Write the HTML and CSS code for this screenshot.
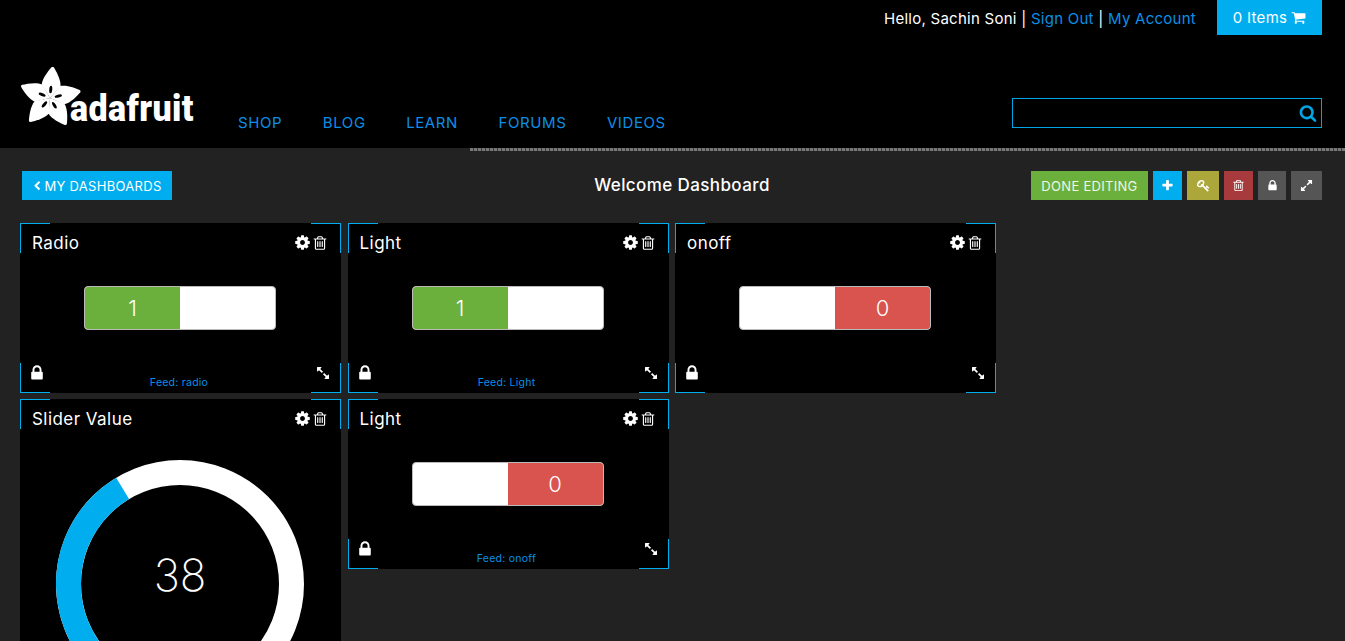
FILE: index.html
```html
<!DOCTYPE html>
<html lang="en">
<head>
<meta charset="utf-8">
<title>Welcome Dashboard</title>
<link rel="stylesheet" href="styles.css">
</head>
<body>
<svg class="sprite" width="0" height="0" aria-hidden="true">
  <symbol id="i-cog" viewBox="0 0 1792 1792"><path d="M1152 896q0-106-75-181t-181-75-181 75-75 181 75 181 181 75 181-75 75-181zm512-109v222q0 12-8 23t-20 13l-185 28q-19 54-39 91 35 50 107 138 10 12 10 25t-9 23q-27 37-99 108t-94 71q-12 0-26-9l-138-108q-44 23-91 38-16 136-29 186-7 28-36 28h-222q-14 0-24.500-8.500t-11.500-21.500l-28-184q-49-16-90-37l-141 107q-10 9-25 9-14 0-25-11-126-114-165-168-7-10-7-23 0-12 8-23 15-21 51-66.500t54-70.500q-27-50-41-99l-183-27q-13-2-21-12.500t-8-23.500v-222q0-12 8-23t19-13l186-28q14-46 39-92-40-57-107-138-10-12-10-24 0-10 9-23 26-36 98.500-107.500t94.500-71.500q13 0 26 10l138 107q44-23 91-38 16-136 29-186 7-28 36-28h222q14 0 24.500 8.500t11.500 21.500l28 184q49 16 90 37l142-107q9-9 24-9 13 0 25 10 129 119 165 170 7 8 7 22 0 12-8 23-15 21-51 66.500t-54 70.500q26 50 41 98l183 28q13 2 21 12.500t8 23.500z"/></symbol>
  <symbol id="i-trash" viewBox="0 0 1792 1792"><path d="M704 736v576q0 14-9 23t-23 9h-64q-14 0-23-9t-9-23v-576q0-14 9-23t23-9h64q14 0 23 9t9 23zm256 0v576q0 14-9 23t-23 9h-64q-14 0-23-9t-9-23v-576q0-14 9-23t23-9h64q14 0 23 9t9 23zm256 0v576q0 14-9 23t-23 9h-64q-14 0-23-9t-9-23v-576q0-14 9-23t23-9h64q14 0 23 9t9 23zm128 724v-948h-896v948q0 22 7 40.500t14.500 27 10.500 8.500h832q3 0 10.500-8.500t14.500-27 7-40.500zm-672-1076h448l-48-117q-7-9-17-11h-317q-10 2-17 11zm928 32v64q0 14-9 23t-23 9h-96v948q0 83-47 143.500t-113 60.500h-832q-66 0-113-58.500t-47-141.500v-952h-96q-14 0-23-9t-9-23v-64q0-14 9-23t23-9h309l70-167q15-37 54-63t79-26h320q40 0 79 26t54 63l70 167h309q14 0 23 9t9 23z"/></symbol>
  <symbol id="i-lock" viewBox="0 0 1792 1792"><path d="M640 768h512v-192q0-106-75-181t-181-75-181 75-75 181v192zm832 96v576q0 40-28 68t-68 28h-960q-40 0-68-28t-28-68v-576q0-40 28-68t68-28h32v-192q0-184 132-316t316-132 316 132 132 316v192h32q40 0 68 28t28 68z"/></symbol>
  <symbol id="i-expand" viewBox="0 0 1792 1792"><path d="M883 1056q0 13-10 23l-332 332 144 144q19 19 19 45t-19 45-45 19h-448q-26 0-45-19t-19-45v-448q0-26 19-45t45-19 45 19l144 144 332-332q10-10 23-10t23 10l114 114q10 10 10 23zm781-864v448q0 26-19 45t-45 19-45-19l-144-144-332 332q-10 10-23 10t-23-10l-114-114q-10-10-10-23t10-23l332-332-144-144q-19-19-19-45t19-45 45-19h448q26 0 45 19t19 45z"/></symbol>
  <symbol id="i-plus" viewBox="0 0 1792 1792"><path d="M1600 736v192q0 40-28 68t-68 28h-416v416q0 40-28 68t-68 28h-192q-40 0-68-28t-28-68v-416h-416q-40 0-68-28t-28-68v-192q0-40 28-68t68-28h416v-416q0-40 28-68t68-28h192q40 0 68 28t28 68v416h416q40 0 68 28t28 68z"/></symbol>
  <symbol id="i-key" viewBox="0 0 1792 1792"><path d="M832 512q0-80-56-136t-136-56-136 56-56 136q0 42 19 83-41-19-83-19-80 0-136 56t-56 136 56 136 136 56 136-56 56-136q0-42-19-83 41 19 83 19 80 0 136-56t56-136zm851 704q0 17-49 66t-66 49q-9 0-28.500-16t-36.500-33-38.500-40-24.500-26l-96 96 220 220q28 28 28 68 0 42-39 81t-81 39q-40 0-68-28l-671-671q-176 131-365 131-163 0-265.500-102.500t-102.500-265.500q0-160 95-313t248-248 313-95q163 0 265.500 102.500t102.500 265.500q0 189-131 365l355 355 96-96q-3-3-26-24.500t-40-38.500-33-36.500-16-28.500q0-17 49-66t66-49q13 0 23 10 6 6 46 44.500t82 79.500 86.500 86 73 78 28.500 41z"/></symbol>
  <symbol id="i-search" viewBox="0 0 1792 1792"><path d="M1216 832q0-185-131.500-316.500t-316.500-131.500-316.500 131.500-131.500 316.500 131.500 316.500 316.500 131.500 316.500-131.500 131.500-316.500zm512 832q0 52-38 90t-90 38q-54 0-90-38l-343-342q-179 124-399 124-143 0-273.500-55.500t-225-150-150-225-55.500-273.500 55.500-273.500 150-225 225-150 273.500-55.500 273.500 55.500 225 150 150 225 55.500 273.500q0 220-124 399l343 343q37 37 37 90z"/></symbol>
  <symbol id="i-cart" viewBox="0 0 1792 1792"><path d="M704 1536q0 52-38 90t-90 38-90-38-38-90 38-90 90-38 90 38 38 90zm896 0q0 52-38 90t-90 38-90-38-38-90 38-90 90-38 90 38 38 90zm128-1088v512q0 24-16.500 42.500t-40.500 21.500l-1044 122q13 60 13 70 0 16-24 64h920q26 0 45 19t19 45-19 45-45 19h-1024q-26 0-45-19t-19-45q0-11 8-31.500t16-36 21.500-40 15.500-29.500l-177-823h-204q-26 0-45-19t-19-45 19-45 45-19h256q16 0 28.500 6.500t19.500 15.500 13 24.500 8 26 5.500 29.500 4.500 26h1201q26 0 45 19t19 45z"/></symbol>
  <symbol id="i-chevron" viewBox="0 0 1792 1792"><path d="M1427 301l-531 531 531 531q19 19 19 45t-19 45l-166 166q-19 19-45 19t-45-19l-742-742q-19-19-19-45t19-45l742-742q19-19 45-19t45 19l166 166q19 19 19 45t-19 45z"/></symbol>
</svg>

<header class="site-header">
  <div class="account-bar">
    <p class="account-links">Hello, Sachin Soni | <a href="#">Sign Out</a> | <a href="#">My Account</a></p>
    <a class="cart-button" href="#">0 Items <svg class="icon icon-cart"><use href="#i-cart"/></svg></a>
  </div>
  <div class="main-bar">
    <a class="logo" href="#">
      <svg class="logo-flower" viewBox="0 0 64 64" aria-hidden="true">
        <g transform="translate(31 31) rotate(5)">
          <path id="petal" d="M0 0L-9.400 -12.500C-9.500 -19 -4 -27 -1.200 -30.800Q0 -32 1.200 -30.800C4 -27 9.500 -19 9.400 -12.500Z" fill="#fff"/>
          <use href="#petal" transform="rotate(72)"/>
          <use href="#petal" transform="rotate(144)"/>
          <use href="#petal" transform="rotate(216)"/>
          <use href="#petal" transform="rotate(288)"/>
          <g fill="#000">
            <ellipse id="seed" cx="0" cy="-8.500" rx="1.500" ry="3.700"/>
            <use href="#seed" transform="rotate(72)"/>
            <use href="#seed" transform="rotate(144)"/>
            <use href="#seed" transform="rotate(216)"/>
            <use href="#seed" transform="rotate(288)"/>
          </g>
        </g>
      </svg>
      <span class="logo-word">adafruit</span>
    </a>
    <nav class="main-nav">
      <a href="#">SHOP</a>
      <a href="#">BLOG</a>
      <a href="#">LEARN</a>
      <a href="#">FORUMS</a>
      <a href="#">VIDEOS</a>
    </nav>
    <form class="search">
      <input class="search-input" type="text" aria-label="Search">
      <svg class="icon icon-search"><use href="#i-search"/></svg>
    </form>
  </div>
</header>
<div class="header-rule"></div>

<main class="content">
  <div class="toolbar">
    <a class="btn btn-blue btn-back" href="#"><svg class="icon icon-chevron"><use href="#i-chevron"/></svg>MY DASHBOARDS</a>
    <h1 class="dash-title">Welcome Dashboard</h1>
    <div class="actions">
      <a class="btn btn-green btn-done" href="#">DONE EDITING</a>
      <a class="btn btn-blue btn-icon w29" href="#"><svg class="icon"><use href="#i-plus"/></svg></a>
      <a class="btn btn-olive btn-icon w32" href="#"><svg class="icon"><use href="#i-key"/></svg></a>
      <a class="btn btn-red btn-icon w29" href="#"><svg class="icon"><use href="#i-trash"/></svg></a>
      <a class="btn btn-grey btn-icon w28" href="#"><svg class="icon"><use href="#i-lock"/></svg></a>
      <a class="btn btn-grey btn-icon w31" href="#"><svg class="icon"><use href="#i-expand"/></svg></a>
    </div>
  </div>

  <div class="board">
    <section class="card">
      <div class="card-head"><h2>Radio</h2><div class="card-tools"><svg class="icon icon-cog"><use href="#i-cog"/></svg><svg class="icon"><use href="#i-trash"/></svg></div></div>
      <div class="card-body"><div class="toggle"><span class="seg seg-on">1</span><span class="seg"></span></div></div>
      <div class="card-foot"><svg class="icon"><use href="#i-lock"/></svg><span class="feed">Feed: radio</span><svg class="icon icon-resize"><use href="#i-expand"/></svg></div>
      <i class="corner tl"></i><i class="corner tr"></i><i class="corner bl"></i><i class="corner br"></i>
    </section>
    <section class="card">
      <div class="card-head"><h2>Light</h2><div class="card-tools"><svg class="icon icon-cog"><use href="#i-cog"/></svg><svg class="icon"><use href="#i-trash"/></svg></div></div>
      <div class="card-body"><div class="toggle"><span class="seg seg-on">1</span><span class="seg"></span></div></div>
      <div class="card-foot"><svg class="icon"><use href="#i-lock"/></svg><span class="feed">Feed: Light</span><svg class="icon icon-resize"><use href="#i-expand"/></svg></div>
      <i class="corner tl"></i><i class="corner tr"></i><i class="corner bl"></i><i class="corner br"></i>
    </section>
    <section class="card">
      <div class="card-head"><h2>onoff</h2><div class="card-tools"><svg class="icon icon-cog"><use href="#i-cog"/></svg><svg class="icon"><use href="#i-trash"/></svg></div></div>
      <div class="card-body"><div class="toggle"><span class="seg"></span><span class="seg seg-off">0</span></div></div>
      <div class="card-foot"><svg class="icon"><use href="#i-lock"/></svg><span class="feed"></span><svg class="icon icon-resize"><use href="#i-expand"/></svg></div>
      <i class="corner tl"></i><i class="corner tr"></i><i class="corner bl"></i><i class="corner br"></i>
    </section>
    <section class="card card-gauge">
      <div class="card-head"><h2>Slider Value</h2><div class="card-tools"><svg class="icon icon-cog"><use href="#i-cog"/></svg><svg class="icon"><use href="#i-trash"/></svg></div></div>
      <div class="gauge">
        <svg class="gauge-ring" viewBox="0 0 248 248" aria-hidden="true">
          <circle class="ring-track" cx="124" cy="124" r="111.500"/>
          <path class="ring-value" d="M66.600 28.400A111.500 111.500 0 0 0 66.600 219.600"/>
        </svg>
        <span class="gauge-value">38</span>
      </div>
      <i class="corner tl"></i><i class="corner tr"></i>
    </section>
    <section class="card">
      <div class="card-head"><h2>Light</h2><div class="card-tools"><svg class="icon icon-cog"><use href="#i-cog"/></svg><svg class="icon"><use href="#i-trash"/></svg></div></div>
      <div class="card-body"><div class="toggle"><span class="seg"></span><span class="seg seg-off">0</span></div></div>
      <div class="card-foot"><svg class="icon"><use href="#i-lock"/></svg><span class="feed">Feed: onoff</span><svg class="icon icon-resize"><use href="#i-expand"/></svg></div>
      <i class="corner tl"></i><i class="corner tr"></i><i class="corner bl"></i><i class="corner br"></i>
    </section>
  </div>
</main>
</body>
</html>
```

FILE: styles.css
```css
* { box-sizing: border-box; }

html, body {
  margin: 0;
  height: 641px;
  overflow: hidden;
  background: #222;
  color: #fff;
  font-family: "Inter", "Liberation Sans", sans-serif;
}

a { color: inherit; text-decoration: none; }

.sprite { position: absolute; }

.icon { display: block; width: 16px; height: 16px; fill: currentColor; flex: none; }

/* Header */
.site-header { background: #000; height: 148px; padding-right: 23px; }

.account-bar { display: flex; justify-content: flex-end; height: 62px; }

.account-links { margin: 0; padding-top: 10px; font-size: 15px; line-height: 18px; letter-spacing: 0.260px; }
.account-links a { color: #0b8fe6; }

.cart-button {
  display: flex;
  align-items: center;
  justify-content: center;
  gap: 4px;
  width: 105px;
  height: 35px;
  margin-left: 21px;
  background: #00aeef;
  font-size: 15px;
  letter-spacing: 0.300px;
}
.icon-cart { width: 15px; height: 15px; }

.main-bar { display: flex; align-items: flex-start; padding-left: 22px; }

.logo { display: flex; width: 216px; height: 66px; margin-top: 5px; }
.logo-flower { width: 64px; height: 64px; flex: none; margin-left: -3px; }
.logo-word {
  display: block;
  height: 40px;
  margin: 22px 0 0 -13px;
  font-family: "Roboto", sans-serif;
  font-weight: 900;
  font-size: 34px;
  line-height: 40px;
  letter-spacing: 0.400px;
  transform: scaleY(1.060);
  transform-origin: 0 31px;
}

.main-nav { display: flex; gap: 40.500px; padding-top: 52px; font-size: 15px; line-height: 18px; letter-spacing: 0.600px; color: #0b8fe6; }

.search { display: flex; align-items: center; margin-left: auto; margin-top: 36px; width: 310px; height: 30px; border: 1px solid #00a5e3; padding-right: 4px; }
.search-input { flex: 1; min-width: 0; height: 100%; border: 0; background: transparent; outline: 0; }
.icon-search { width: 18px; height: 18px; color: #00a5e3; }

.header-rule { height: 3px; margin-left: 470px; background: repeating-linear-gradient(90deg, #777 0 3px, #3a3a3a 3px 4px); }

/* Toolbar */
.content { padding: 20px 23px 0 20px; }

.toolbar { display: grid; grid-template-columns: 1fr auto 1fr; align-items: center; height: 29px; padding-left: 2px; }

.btn { display: flex; align-items: center; justify-content: center; height: 29px; font-size: 13px; letter-spacing: 0.300px; }
.btn-blue { background: #00aeef; }
.btn-green { background: #6bb03c; }
.btn-olive { background: #aba73a; }
.btn-red { background: #a73a3c; }
.btn-grey { background: #555; }

.btn-back { width: 150px; gap: 2px; justify-self: start; }
.icon-chevron { width: 10px; height: 10px; }

.dash-title { margin: 0 0 2px 20px; font-size: 17px; font-weight: 500; letter-spacing: 0.400px; }

.actions { display: flex; gap: 5px; justify-self: end; }
.btn-done { width: 117px; color: #eef6e8; }
.btn-icon .icon { width: 13px; height: 13px; }
.w28 { width: 28px; }
.w29 { width: 29px; }
.w31 { width: 31px; }
.w32 { width: 32px; }

/* Board */
.board {
  display: grid;
  grid-template-columns: repeat(3, 321px);
  grid-auto-rows: 170px;
  gap: 6px 6.500px;
  margin-top: 23px;
}

.card { position: relative; display: flex; flex-direction: column; background: #000; padding: 0 12px; }
.card-gauge { height: 360px; }

.card-head { display: flex; justify-content: space-between; align-items: center; height: 41px; padding-bottom: 2px; }
.card-head h2 { margin: 0; font-size: 17px; font-weight: 400; letter-spacing: 0.450px; }
.card-tools { display: flex; align-items: center; gap: 1px; margin-right: 1px; }
.icon-cog { width: 17px; height: 17px; }

.card-body { flex: 1; display: flex; justify-content: center; padding: 22px 1px 0 0; }

.toggle { display: flex; width: 192px; height: 44px; background: #fff; border: 1px solid #bbb; border-radius: 4px; overflow: hidden; font-size: 22px; font-weight: 300; }
.seg { flex: 1; display: flex; align-items: center; justify-content: center; }
.seg-on { background: #6bb03c; }
.seg-off { background: #d9534f; }

.card-foot { display: grid; grid-template-columns: 1fr auto 1fr; align-items: center; height: 29px; margin: 0 -1px 0 -4px; padding-bottom: 11px; }
.card-foot .icon { width: 18px; height: 18px; }
.card-foot .icon-resize { width: 14px; height: 14px; justify-self: end; transform: rotate(90deg); }
.feed { font-size: 10.500px; letter-spacing: 0.250px; color: #0b8fe6; align-self: end; margin-bottom: -7px; }

.gauge { position: relative; height: 248px; margin-top: 20px; padding-right: 1px; display: flex; justify-content: center; }
.gauge-ring { width: 248px; height: 248px; flex: none; }
.ring-track { fill: none; stroke: #fff; stroke-width: 25; }
.ring-value { fill: none; stroke: #00aeef; stroke-width: 25; }
.gauge-value { position: absolute; inset: 0; padding: 0 1px 18px 0; display: flex; align-items: center; justify-content: center; font-size: 44px; font-weight: 200; }

/* Blue corner brackets that sit on the card edges */
.corner { position: absolute; width: 30px; height: 30px; border: 0 solid #00aeef; }
.tl { top: 0; left: 0; border-width: 1px 0 0 1px; }
.tr { top: 0; right: 0; border-width: 1px 1px 0 0; }
.bl { bottom: 0; left: 0; border-width: 0 0 1px 1px; }
.br { bottom: 0; right: 0; border-width: 0 1px 1px 0; }
```
